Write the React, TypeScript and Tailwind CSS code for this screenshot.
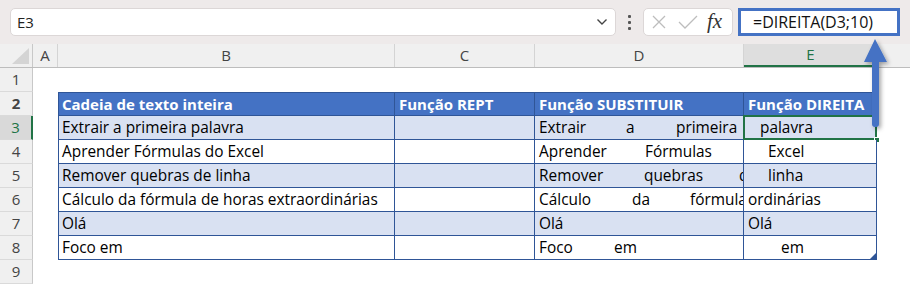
import React from "react";

type Word = { t: string; w?: string };
type Row = { n: number; b: string; d: Word[]; e: string; ePad: string };

const ROWS: Row[] = [
  { n: 3, b: "Extrair a primeira palavra", d: [{ t: "Extrair", w: "w-[87px]" }, { t: "a", w: "w-[50px]" }, { t: "primeira" }], e: "palavra", ePad: "pl-[16px]" },
  { n: 4, b: "Aprender Fórmulas do Excel", d: [{ t: "Aprender", w: "w-[106px]" }, { t: "Fórmulas" }], e: "Excel", ePad: "pl-[24px]" },
  { n: 5, b: "Remover quebras de linha", d: [{ t: "Remover", w: "w-[105px]" }, { t: "quebras", w: "w-[95px]" }, { t: "de" }], e: "linha", ePad: "pl-[24px]" },
  { n: 6, b: "Cálculo da fórmula de horas extraordinárias", d: [{ t: "Cálculo", w: "w-[93px]" }, { t: "da", w: "w-[58px]" }, { t: "fórmula" }], e: "ordinárias", ePad: "pl-[4px]" },
  { n: 7, b: "Olá", d: [{ t: "Olá" }], e: "Olá", ePad: "pl-[4px]" },
  { n: 8, b: "Foco em", d: [{ t: "Foco", w: "w-[75px]" }, { t: "em" }], e: "em", ePad: "pl-[37px]" },
];

const font = "font-['Open_Sans','Liberation_Sans',sans-serif]";

function RowHead({ n, active }: { n: number; active?: boolean }) {
  return (
    <div
      className={
        active
          ? "w-[33px] shrink-0 h-full flex items-center justify-center bg-[#d9d9d9] border-r-2 border-r-[#217346] border-b border-b-[#dadada] text-[#217346] text-[15px]"
          : "w-[33px] shrink-0 h-full flex items-center justify-center bg-[#f0f0f0] border-r border-r-[#c8c8c8] border-b border-b-[#dadada] text-[#444] text-[15px]"
      }
    >
      {n}
    </div>
  );
}

export default function App() {
  return (
    <div className={`relative w-[910px] h-[285px] overflow-hidden bg-white ${font}`}>
      {/* formula bar */}
      <div className="h-[44px] bg-[#eeeaea] flex items-start pt-[8px] pl-[10px]">
        <div className="w-[606px] h-[28px] bg-white border border-[#dcd7d7] rounded-[5px] flex items-center justify-between pl-[6px] pr-[6px]">
          <span className="text-[15px] text-[#222]">E3</span>
          <svg width="12" height="8" viewBox="0 0 12 8" className="mr-[1px]">
            <path d="M1.5 1.5 L6 6 L10.5 1.5" fill="none" stroke="#444" strokeWidth="1.4" />
          </svg>
        </div>
        <div className="w-[27px] h-[28px] flex flex-col items-center justify-center gap-[3px]">
          <span className="w-[3px] h-[3px] bg-[#555] rounded-[1px]" />
          <span className="w-[3px] h-[3px] bg-[#555] rounded-[1px]" />
          <span className="w-[3px] h-[3px] bg-[#555] rounded-[1px]" />
        </div>
        <div className="w-[90px] h-[28px] bg-white border border-[#dcd7d7] rounded-[5px] flex items-center pl-[7px] gap-[11px]">
          <svg width="16" height="16" viewBox="0 0 16 16">
            <path d="M2 2 L14 14 M14 2 L2 14" stroke="#bdbdbd" strokeWidth="1.3" />
          </svg>
          <svg width="20" height="16" viewBox="0 0 20 16">
            <path d="M1 8 L7 14 L19 2" fill="none" stroke="#bdbdbd" strokeWidth="1.3" />
          </svg>
          <span className="font-['Liberation_Serif',serif] italic text-[21px] text-[#333] leading-none -ml-[2px] -mt-[2px]">
            fx
          </span>
        </div>
        <div className="ml-[5px] w-[162px] h-[28px] bg-white border-[3px] border-[#4472c4] flex items-center pl-[12px]">
          <span className="text-[16px] text-[#111]">=DIREITA(D3;10)</span>
        </div>
      </div>

      {/* column headers */}
      <div className="h-[24px] flex bg-[#f0f0f0] border-b border-[#bdbdbd] text-[15px] text-[#444]">
        <div className="w-[33px] shrink-0 border-r border-[#c8c8c8] flex items-end justify-end pr-[2px] pb-[2px]">
          <svg width="18" height="17" viewBox="0 0 18 17">
            <path d="M17 0 L17 16 L0 16 Z" fill="#d4d4d4" />
          </svg>
        </div>
        <div className="w-[25px] shrink-0 border-r border-[#d4d4d4] flex items-center justify-center">A</div>
        <div className="w-[337px] shrink-0 border-r border-[#d4d4d4] flex items-center justify-center">B</div>
        <div className="w-[140px] shrink-0 border-r border-[#d4d4d4] flex items-center justify-center">C</div>
        <div className="w-[209px] shrink-0 border-r border-[#d4d4d4] flex items-center justify-center">D</div>
        <div className="w-[133px] shrink-0 bg-[#dedede] border-b-2 border-[#217346] text-[#217346] flex items-center justify-center">E</div>
        <div className="flex-1 border-l border-[#d4d4d4]" />
      </div>

      {/* row 1 */}
      <div className="h-[24px] flex">
        <RowHead n={1} />
        <div className="flex-1" />
      </div>

      {/* row 2: table header */}
      <div className="h-[24px] flex text-[15px] font-bold text-white">
        <RowHead n={2} />
        <div className="w-[25px] shrink-0" />
        <div className="w-[337px] shrink-0 bg-[#4472c4] border border-[#2f5597] flex items-center pl-[3px]">Cadeia de texto inteira</div>
        <div className="w-[140px] shrink-0 bg-[#4472c4] border-y border-r border-[#2f5597] flex items-center pl-[4px]">Função REPT</div>
        <div className="w-[209px] shrink-0 bg-[#4472c4] border-y border-r border-[#2f5597] flex items-center pl-[4px]">Função SUBSTITUIR</div>
        <div className="w-[133px] shrink-0 bg-[#4472c4] border-y border-r border-[#2f5597] flex items-center pl-[4px] whitespace-nowrap overflow-hidden">Função DIREITA</div>
        <div className="flex-1" />
      </div>

      {ROWS.map((r) => {
        const band = r.n % 2 === 1 ? "bg-[#d9e1f2]" : "bg-white";
        return (
          <div key={r.n} className="h-[24px] flex text-[15.4px] text-black">
            <RowHead n={r.n} active={r.n === 3} />
            <div className="w-[25px] shrink-0" />
            <div className={`w-[337px] shrink-0 ${band} border-x border-b border-[#2f5597] flex items-center pl-[3px] whitespace-nowrap overflow-hidden`}>
              {r.b}
            </div>
            <div className={`w-[140px] shrink-0 ${band} border-r border-b border-[#2f5597]`} />
            <div className={`w-[209px] shrink-0 ${band} border-r border-b border-[#2f5597] flex items-center pl-[4px] whitespace-nowrap overflow-hidden`}>
              {r.d.map((w, i) => (
                <span key={i} className={w.w ? `${w.w} shrink-0` : "shrink-0"}>
                  {w.t}
                </span>
              ))}
            </div>
            <div className={`relative w-[133px] shrink-0 ${band} border-r border-b border-[#2f5597] flex items-center ${r.ePad} whitespace-nowrap`}>
              {r.e}
              {r.n === 3 && (
                <>
                  <div className="absolute -left-[1px] -top-[1px] w-[134px] h-[25px] border-2 border-[#217346]" />
                  <div className="absolute -right-[4px] -bottom-[4px] w-[6px] h-[6px] bg-[#217346] border border-white" />
                </>
              )}
              {r.n === 8 && (
                <svg width="6" height="6" viewBox="0 0 6 6" className="absolute right-0 bottom-0">
                  <path d="M6 0 L6 6 L0 6 Z" fill="#2f5597" />
                </svg>
              )}
            </div>
            <div className="flex-1" />
          </div>
        );
      })}

      {/* row 9 */}
      <div className="h-[24px] flex">
        <RowHead n={9} />
        <div className="flex-1" />
      </div>

      {/* callout arrow */}
      <svg width="40" height="100" viewBox="0 0 40 100" className="absolute left-[855px] top-[34px]">
        <defs>
          <filter id="sh" x="-50%" y="-20%" width="200%" height="140%">
            <feDropShadow dx="2" dy="2" stdDeviation="2" floodColor="#000" floodOpacity="0.35" />
          </filter>
        </defs>
        <path
          d="M20 5 L32 28 L24 28 L24 90 Q24 93 21 93 L20 93 Q17 93 17 90 L17 28 L9 28 Z"
          fill="#4472c4"
          filter="url(#sh)"
        />
      </svg>
    </div>
  );
}
